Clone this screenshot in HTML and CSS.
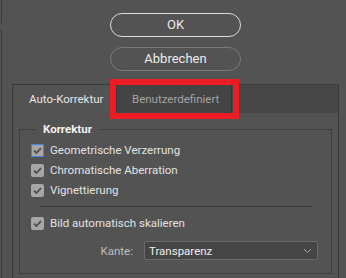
FILE: index.html
```html
<!DOCTYPE html>
<html lang="de">
<head>
<meta charset="utf-8">
<title>Objektivkorrektur</title>
<link rel="stylesheet" href="styles.css">
</head>
<body>
<div class="screen">
  <div class="edge">
    <div class="edge-top"></div>
    <div class="edge-bottom"></div>
  </div>
  <div class="main">
    <div class="buttons">
      <button class="btn btn-primary" type="button">OK</button>
      <button class="btn" type="button">Abbrechen</button>
    </div>
    <div class="tabpanel">
      <div class="tabs">
        <div class="tab tab-active">Auto-Korrektur</div>
        <div class="tab tab-inactive highlighted">Benutzerdefiniert</div>
        <div class="tab-fill"></div>
      </div>
      <fieldset class="group">
        <legend class="group-title">Korrektur</legend>
        <div class="check-row">
          <span class="checkbox focused"><svg viewBox="0 0 13 13" width="13" height="13"><path d="M3 6.6 L5.4 9 L10 4.2" /></svg></span>
          <span class="check-label">Geometrische Verzerrung</span>
        </div>
        <div class="check-row">
          <span class="checkbox"><svg viewBox="0 0 13 13" width="13" height="13"><path d="M3 6.6 L5.4 9 L10 4.2" /></svg></span>
          <span class="check-label">Chromatische Aberration</span>
        </div>
        <div class="check-row">
          <span class="checkbox"><svg viewBox="0 0 13 13" width="13" height="13"><path d="M3 6.6 L5.4 9 L10 4.2" /></svg></span>
          <span class="check-label">Vignettierung</span>
        </div>
        <hr class="separator">
        <div class="check-row">
          <span class="checkbox"><svg viewBox="0 0 13 13" width="13" height="13"><path d="M3 6.6 L5.4 9 L10 4.2" /></svg></span>
          <span class="check-label">Bild automatisch skalieren</span>
        </div>
        <div class="field-row">
          <span class="field-label">Kante:</span>
          <div class="select">
            <span class="select-value">Transparenz</span>
            <svg class="chevron" viewBox="0 0 9 6" width="9" height="6"><path d="M1 1 L4.5 4.5 L8 1" /></svg>
          </div>
        </div>
      </fieldset>
    </div>
  </div>
</div>
</body>
</html>
```
FILE: styles.css
```css
* { box-sizing: border-box; }

html, body {
  margin: 0;
  padding: 0;
  background: #535353;
}

body {
  font-family: Roboto, "Noto Sans", sans-serif;
  font-size: 11.5px;
  color: #e2e2e2;
}

.screen {
  display: flex;
  width: 346px;
  height: 278px;
  overflow: hidden;
}

/* partial panels at the left edge */
.edge {
  width: 2px;
  display: flex;
  flex-direction: column;
}
.edge-top {
  height: 23px;
  border-right: 1px solid #3b3b3b;
  border-bottom: 1px solid #3b3b3b;
}
.edge-bottom {
  flex: 1;
  margin-top: 7px;
  border-right: 1px solid #3b3b3b;
  border-top: 1px solid #3b3b3b;
}

.main {
  flex: 1;
  display: flex;
  flex-direction: column;
  padding-top: 13px;
}

/* dialog buttons */
.buttons {
  display: flex;
  flex-direction: column;
  gap: 10px;
  padding-left: 108px;
}
.btn {
  width: 131px;
  height: 24px;
  border-radius: 12px;
  background: transparent;
  border: 1px solid #7a7a7a;
  color: #ececec;
  font-family: Roboto, "Noto Sans", sans-serif;
  font-size: 13px;
  padding: 0;
  line-height: 20px;
}
.btn-primary {
  border: 1.5px solid #dcdcdc;
}

/* tab panel */
.tabpanel {
  flex: 1;
  margin: 13px 7px 0 10px;
  border: 1px solid #3a3a3a;
  border-bottom: none;
  display: flex;
  flex-direction: column;
}
.tabs {
  display: flex;
  height: 28px;
}
.tab {
  line-height: 28px;
  white-space: nowrap;
}
.tab-active {
  width: 103px;
  padding-left: 16px;
  color: #e6e6e6;
}
.tab-inactive {
  width: 116px;
  padding-left: 15px;
  background: #444444;
  border-left: 1px solid #3a3a3a;
  border-right: 1px solid #3a3a3a;
  color: #a3a3a3;
}
.tab-fill {
  flex: 1;
  background: #474747;
}

/* red annotation frame over the inactive tab */
.highlighted {
  position: relative;
}
.highlighted::after {
  content: "";
  position: absolute;
  top: -6px;
  bottom: -6px;
  left: -7px;
  right: -8px;
  border: 6px solid #ed1c24;
}

/* group box */
.group {
  margin: 8px 6px 0 6px;
  padding: 3px 0 13px 0;
  border: 1px solid #3e3e3e;
  min-width: 0;
}
.group-title {
  margin-left: 16px;
  padding: 0 9px 0 7px;
  font-weight: bold;
  color: #f2f2f2;
  line-height: 16px;
}

.check-row {
  display: flex;
  align-items: center;
  gap: 6px;
  height: 20px;
  padding-left: 11px;
}
.checkbox {
  width: 13px;
  height: 13px;
  border-radius: 2px;
  background: #a6a6a6;
  display: flex;
}
.checkbox svg path {
  fill: none;
  stroke: #4e4e4e;
  stroke-width: 1.8;
}
.checkbox.focused {
  box-shadow: inset 0 0 0 1px #3f84e4;
}

.separator {
  margin: 6px 19px;
  border: none;
  border-top: 1px solid #3c3c3c;
  height: 0;
}

.field-row {
  display: flex;
  align-items: center;
  margin-top: 8px;
  gap: 11px;
}
.field-label {
  width: 113px;
  text-align: right;
  color: #bdbdbd;
}
.select {
  width: 174px;
  height: 19px;
  display: flex;
  align-items: center;
  justify-content: space-between;
  padding: 0 5px 0 4px;
  background: #454545;
  border: 1px solid #696969;
  border-radius: 2px;
  color: #ededed;
}
.chevron path {
  fill: none;
  stroke: #a8a8a8;
  stroke-width: 1;
}
```
